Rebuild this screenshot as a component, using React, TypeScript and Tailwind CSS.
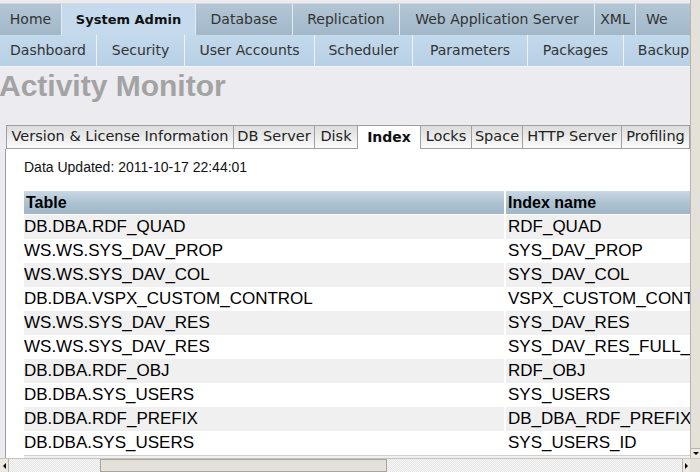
import React from "react";

const topTabs = [
  { label: "Home", w: "w-[62px]" },
  { label: "System Admin", w: "w-[134px]", active: true },
  { label: "Database", w: "w-[97px]" },
  { label: "Replication", w: "w-[107px]" },
  { label: "Web Application Server", w: "w-[195px]" },
  { label: "XML", w: "w-[41px]" },
];

const subTabs = [
  { label: "Dashboard", w: "w-[97px]" },
  { label: "Security", w: "w-[88px]" },
  { label: "User Accounts", w: "w-[130px]" },
  { label: "Scheduler", w: "w-[98px]" },
  { label: "Parameters", w: "w-[115px]" },
  { label: "Packages", w: "w-[96px]" },
  { label: "Backup", w: "w-[80px]" },
];

const panelTabs = [
  { label: "Version & License Information", w: "w-[227px]" },
  { label: "DB Server", w: "w-[81px]" },
  { label: "Disk", w: "w-[43px]" },
  { label: "Index", w: "w-[63px]", active: true },
  { label: "Locks", w: "w-[51px]" },
  { label: "Space", w: "w-[51px]" },
  { label: "HTTP Server", w: "w-[99px]" },
  { label: "Profiling", w: "w-[68px]" },
];

const rows = [
  ["DB.DBA.RDF_QUAD", "RDF_QUAD"],
  ["WS.WS.SYS_DAV_PROP", "SYS_DAV_PROP"],
  ["WS.WS.SYS_DAV_COL", "SYS_DAV_COL"],
  ["DB.DBA.VSPX_CUSTOM_CONTROL", "VSPX_CUSTOM_CONTROL"],
  ["WS.WS.SYS_DAV_RES", "SYS_DAV_RES"],
  ["WS.WS.SYS_DAV_RES", "SYS_DAV_RES_FULL_PATH"],
  ["DB.DBA.RDF_OBJ", "RDF_OBJ"],
  ["DB.DBA.SYS_USERS", "SYS_USERS"],
  ["DB.DBA.RDF_PREFIX", "DB_DBA_RDF_PREFIX"],
  ["DB.DBA.SYS_USERS", "SYS_USERS_ID"],
];

const track =
  "bg-[repeating-conic-gradient(#e4e4e4_0%_25%,#f8f8f8_0%_50%)] bg-[length:2px_2px]";

export default function App() {
  return (
    <div className="w-[700px] h-[472px] overflow-hidden flex flex-col bg-[#ebebf0] font-['DejaVu_Sans',sans-serif]">
      <div className="flex flex-1 min-h-0">
        {/* page */}
        <div className="w-[690px] shrink-0 overflow-hidden">
          <div className="w-[900px]">
            {/* top nav */}
            <div className="mt-[3px] border-t border-[#d8d8de] flex h-[32px]">
              {topTabs.map((t) => (
                <div
                  key={t.label}
                  className={`${t.w} shrink-0 flex items-center justify-center border-r border-[#e4ecf3] ${
                    t.active
                      ? "bg-[#c5dbed] text-[#111] font-bold text-[13px]"
                      : "bg-gradient-to-b from-[#b2c6d5] to-[#a2b8c9] text-[#333] text-[14px]"
                  }`}
                >
                  {t.label}
                </div>
              ))}
              <div className="w-[130px] shrink-0 pl-[10px] flex items-center bg-gradient-to-b from-[#b2c6d5] to-[#a2b8c9] text-[#333] text-[14px]">
                We
              </div>
            </div>
            <div className="flex h-[32px] border-b border-[#f4f7fa]">
              {subTabs.map((t) => (
                <div
                  key={t.label}
                  className={`${t.w} shrink-0 flex items-center justify-center border-r border-[#eef3f8] bg-gradient-to-b from-[#c3d9ec] to-[#b8d0e5] text-[14px] text-[#333]`}
                >
                  {t.label}
                </div>
              ))}
            </div>

            {/* title */}
            <div className="h-[36px] mt-[1px] leading-[36px] text-[30px] font-bold text-[#a3a3a3] font-['Liberation_Sans',Arial,sans-serif] -ml-[1px]">
              Activity Monitor
            </div>

            {/* panel tabs */}
            <div className="mt-[21px] ml-[6px] flex h-[24px] items-end">
              {panelTabs.map((t) => (
                <div
                  key={t.label}
                  className={`${t.w} shrink-0 h-[24px] flex items-center justify-center border-t border-l border-[#a0a0a0] ${
                    t.active
                      ? "bg-white font-bold text-[#111] text-[14px]"
                      : "bg-gradient-to-b from-[#dcdcdc] to-[#fbfbfb] border-b text-[#222] text-[14.5px]"
                  }`}
                >
                  {t.label}
                </div>
              ))}
              <div className="w-[2px] h-[24px] border-l border-[#a0a0a0]" />
            </div>

            {/* panel */}
            <div className="ml-[5px] w-[685px] bg-white border-l border-[#a0a0a0] pl-[18px] pt-[10px] font-['Liberation_Sans',Arial,sans-serif] h-[320px]">
              <div className="text-[14px] text-[#111] leading-[17px]">
                Data Updated: 2011-10-17 22:44:01
              </div>
              <div className="mt-[15px] w-[700px] text-black">
                <div className="flex h-[23px] bg-gradient-to-b from-[#c9d8e3] via-[#aec3d2] to-[#a0b7c8] text-[16px] font-bold items-center">
                  <div className="w-[482px] shrink-0 h-full pl-[2px] border-r-2 border-white flex items-center">
                    Table
                  </div>
                  <div className="pl-[2px]">Index name</div>
                </div>
                <div className="h-[1px] bg-white" />
                {rows.map((r, i) => (
                  <div
                    key={i}
                    className={`flex h-[24px] items-center text-[17px] whitespace-nowrap ${
                      i % 2 === 0 ? "bg-[#f0f0f0]" : "bg-white"
                    }`}
                  >
                    <div className="w-[482px] shrink-0 h-full flex items-center border-r-2 border-white">
                      {r[0]}
                    </div>
                    <div className="pl-[2px]">{r[1]}</div>
                  </div>
                ))}
                <div className="h-[6px] border-t border-[#d0d0d0] bg-[#f0f0f0]" />
              </div>
            </div>
          </div>
        </div>

        {/* vertical scrollbar */}
        <div className="w-[10px] flex flex-col bg-[#e4e1da] border-l border-[#b8b4aa]">
          <div className="flex-1" />
          <div className="h-[10px] bg-[#ece9e2] border-t border-[#b8b4aa] flex items-center justify-center">
            <div className="w-0 h-0 border-l-[3px] border-r-[3px] border-t-[3px] border-l-transparent border-r-transparent border-t-black" />
          </div>
        </div>
      </div>

      {/* horizontal scrollbar */}
      <div className="h-[14px] flex border-t border-[#c8c4bc] bg-[#ece9e2]">
        <div className="w-[9px] flex items-center justify-center border-r border-[#b8b4aa]">
          <div className="w-0 h-0 border-t-[3px] border-b-[3px] border-r-[3px] border-t-transparent border-b-transparent border-r-black" />
        </div>
        <div className={`w-[91px] ${track}`} />
        <div className="w-[287px] bg-[#e4e1da] border border-[#a8a49a]" />
        <div className={`flex-1 ${track}`} />
        <div className="w-[8px] flex items-center justify-center border-l border-[#b8b4aa]">
          <div className="w-0 h-0 border-t-[3px] border-b-[3px] border-l-[3px] border-t-transparent border-b-transparent border-l-black" />
        </div>
        <div className="w-[10px] bg-[#e4e1da]" />
      </div>
    </div>
  );
}
